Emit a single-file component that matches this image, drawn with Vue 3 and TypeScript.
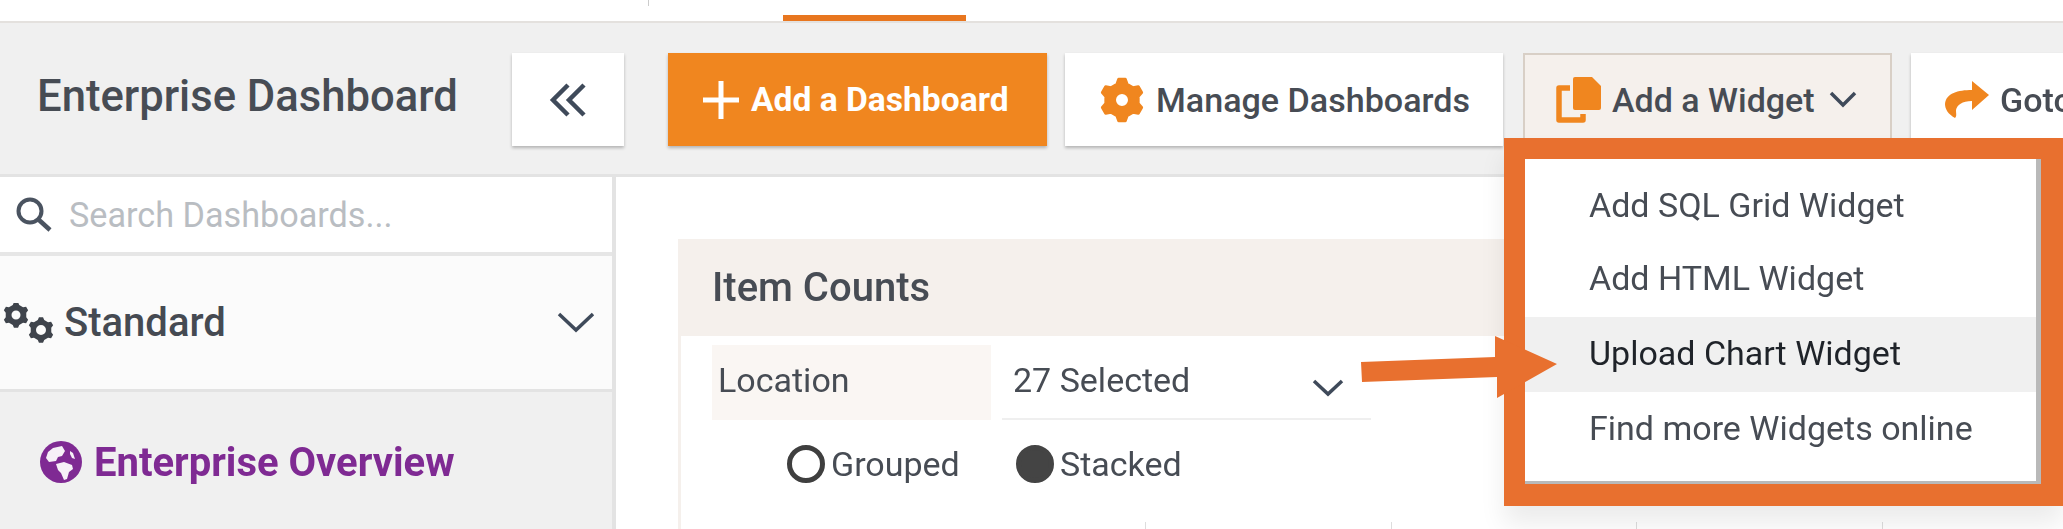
<script setup lang="ts">
const menuItems = [
  { label: 'Add SQL Grid Widget', active: false },
  { label: 'Add HTML Widget', active: false },
  { label: 'Upload Chart Widget', active: true },
  { label: 'Find more Widgets online', active: false },
]

const ticks = [1, 2, 3, 4]

// cog outline with a round hole, used by the manage button and the sidebar icon
function cogPath(cx: number, cy: number, outer: number, inner: number, hole: number, teeth = 6) {
  const pts: string[] = []
  const step = (Math.PI * 2) / teeth
  for (let i = 0; i < teeth; i++) {
    const a = -Math.PI / 2 + i * step
    const spots: [number, number][] = [
      [inner, a - step * 0.3],
      [outer, a - step * 0.15],
      [outer, a + step * 0.15],
      [inner, a + step * 0.3],
    ]
    for (const [r, t] of spots) {
      pts.push(`${(cx + r * Math.cos(t)).toFixed(2)} ${(cy + r * Math.sin(t)).toFixed(2)}`)
    }
  }
  const ring = `M${cx - hole} ${cy}a${hole} ${hole} 0 1 0 ${hole * 2} 0a${hole} ${hole} 0 1 0 ${-hole * 2} 0Z`
  return `M${pts.join('L')}Z${ring}`
}
</script>

<template>
  <div class="page">
    <div class="topbar">
      <span class="topbar-tick" />
      <span class="topbar-tab" />
    </div>

    <div class="toolbar">
      <h1 class="title">Enterprise Dashboard</h1>
      <button class="btn btn-collapse" type="button">
        <svg width="38" height="34" viewBox="0 0 38 34" fill="none" stroke="#3f4a5a" stroke-width="4.5">
          <path d="M19 2 4 17l15 15M35 2 20 17l15 15" />
        </svg>
      </button>
      <button class="btn btn-primary" type="button">
        <svg width="36" height="38" viewBox="0 0 36 38" fill="none" stroke="#fff" stroke-width="5">
          <path d="M18 0v38M0 19h36" />
        </svg>
        Add a Dashboard
      </button>
      <button class="btn btn-manage" type="button">
        <svg width="44" height="46" viewBox="0 0 44 46">
          <path fill="#f0861f" fill-rule="evenodd" stroke="#f0861f" stroke-width="3" stroke-linejoin="round" :d="cogPath(22, 23, 21, 16.5, 7.5)" />
        </svg>
        Manage Dashboards
      </button>
      <button class="btn btn-widget" type="button">
        <svg width="46" height="46" viewBox="0 0 46 46">
          <path d="M14 11H3v32h24v-6" fill="none" stroke="#f0861f" stroke-width="5.5" stroke-linejoin="round" />
          <path d="M19 0h17l9 9v22a2 2 0 0 1-2 2H19a2 2 0 0 1-2-2V2a2 2 0 0 1 2-2Z" fill="#f0861f" />
        </svg>
        Add a Widget
        <svg class="chev-sm" width="28" height="17" viewBox="0 0 28 17" fill="none" stroke="#3f4a5a" stroke-width="3.5">
          <path d="M2 2l12 12L26 2" />
        </svg>
      </button>
      <button class="btn btn-goto" type="button">
        <svg width="44" height="38" viewBox="0 0 44 38">
          <path d="M27 0 44 14 27 29V20C17 20 12 24 11 29 11 33 12 35 10 37 3 33 0 28 0 23 1 12 13 9 27 9Z" fill="#f0861f" />
        </svg>
        Goto
      </button>
    </div>

    <div class="body">
      <aside class="sidebar">
        <div class="search">
          <svg width="36" height="35" viewBox="0 0 36 35" fill="none" stroke="#4a5360" stroke-width="4">
            <circle cx="14" cy="14" r="11.5" />
            <path d="M23 23l11 10" stroke-width="4.5" />
          </svg>
          <span class="search-hint">Search Dashboards...</span>
        </div>
        <div class="group">
          <svg class="group-icon" width="51" height="40" viewBox="0 0 51 40">
            <path fill="#3f444c" fill-rule="evenodd" :d="cogPath(13, 12, 13, 10.5, 4.5)" />
            <path fill="#3f444c" fill-rule="evenodd" :d="cogPath(38, 27, 13, 10.5, 5)" />
          </svg>
          <span class="group-label">Standard</span>
          <svg width="38" height="21" viewBox="0 0 38 21" fill="none" stroke="#3f4a5a" stroke-width="3.5">
            <path d="M2 2l17 16L36 2" />
          </svg>
        </div>
        <div class="nav-item">
          <svg width="42" height="42" viewBox="0 0 42 42">
            <circle cx="21" cy="21" r="21" fill="#7f2a93" />
            <path d="M13 7l9-2 3 5-3 5-4 1-2 4-7 1-3-4 2-6Z M16 23l8-2 8 3 1 4-4 3-2 7-3 1-3-7-3-3Z M30 10l3 2 2 6-3-1-2-4Z" fill="#f6f0f7" />
          </svg>
          <span>Enterprise Overview</span>
        </div>
      </aside>

      <main class="content">
        <section class="card">
          <header class="card-head">Item Counts</header>
          <div class="filter">
            <div class="filter-label">Location</div>
            <div class="filter-value">
              <span>27 Selected</span>
              <svg class="filter-chev" width="32" height="18" viewBox="0 0 32 18" fill="none" stroke="#3f4a5a" stroke-width="3.5">
                <path d="M2 2l14 13L30 2" />
              </svg>
            </div>
          </div>
          <div class="radios">
            <label class="radio"><i class="dot" />Grouped</label>
            <label class="radio"><i class="dot dot-on" />Stacked</label>
          </div>
          <div class="axis">
            <span v-for="t in ticks" :key="t" class="axis-tick" />
          </div>
        </section>
      </main>
    </div>

    <div class="callout">
      <ul class="menu">
        <li v-for="item in menuItems" :key="item.label" class="menu-item" :class="{ active: item.active }">
          {{ item.label }}
        </li>
      </ul>
    </div>
    <svg class="arrow" width="197" height="63" viewBox="0 0 197 63">
      <path d="M0 26 134 21V0L196 28 136 62V41L1 46Z" fill="#e8702f" />
    </svg>
  </div>
</template>

<style>
html,
body {
  margin: 0;
  background: #fff;
}
</style>

<style scoped>
.page {
  position: relative;
  width: 2063px;
  height: 529px;
  overflow: hidden;
  background: #fff;
  font-family: Roboto, 'Liberation Sans', sans-serif;
  color: #474c54;
}

.topbar {
  position: relative;
  height: 21px;
  border-bottom: 2px solid #e4e1de;
}

.topbar-tick {
  position: absolute;
  left: 648px;
  top: 0;
  width: 1px;
  height: 6px;
  background: #ccc;
}

.topbar-tab {
  position: absolute;
  left: 783px;
  bottom: 0;
  width: 183px;
  height: 6px;
  background: #e8761f;
}

.toolbar {
  display: flex;
  align-items: flex-start;
  height: 154px;
  padding-top: 30px;
  box-sizing: border-box;
  background: #f0f0f0;
  border-bottom: 3px solid #e3e3e3;
  filter: blur(0.6px);
}

.title {
  flex: none;
  width: 512px;
  margin: 0;
  padding-left: 37px;
  box-sizing: border-box;
  font-size: 43.6px;
  font-weight: 500;
  line-height: 88px;
  white-space: nowrap;
  color: #474c54;
}

.btn {
  display: flex;
  flex: none;
  align-items: center;
  height: 93px;
  margin: 0 18px 0 0;
  padding: 0;
  border: 0;
  background: #fff;
  box-shadow: 0 2px 3px rgba(0, 0, 0, 0.25);
  font: 500 34px Roboto, 'Liberation Sans', sans-serif;
  color: #474c54;
  white-space: nowrap;
}

.btn-collapse {
  justify-content: center;
  width: 112px;
  margin-right: 44px;
}

.btn-primary {
  gap: 12px;
  width: 379px;
  padding-left: 35px;
  box-sizing: border-box;
  background: #f0861f;
  color: #fff;
  font-size: 33.6px;
  font-weight: 700;
}

.btn-manage {
  gap: 12px;
  width: 438px;
  margin-right: 20px;
  padding-left: 35px;
  box-sizing: border-box;
  font-size: 34.1px;
}

.btn-widget {
  gap: 10px;
  width: 369px;
  margin-right: 19px;
  padding-left: 31px;
  box-sizing: border-box;
  background: #f5f0ec;
  border: 2px solid #d8cfc6;
  box-shadow: none;
}

.chev-sm {
  margin-left: 4px;
}

.btn-goto {
  gap: 11px;
  width: 400px;
  padding-left: 34px;
  box-sizing: border-box;
}

.body {
  display: flex;
  height: 352px;
  filter: blur(0.6px);
}

.sidebar {
  flex: none;
  width: 616px;
  box-sizing: border-box;
  background: #f0f0f0;
  border-right: 4px solid #e3e3e3;
}

.search {
  display: flex;
  align-items: center;
  gap: 17px;
  height: 79px;
  padding-left: 16px;
  box-sizing: border-box;
  background: #fff;
  border-bottom: 4px solid #e6e6e6;
}

.search-hint {
  font-size: 34.2px;
  color: #b9bdc2;
}

.group {
  display: flex;
  align-items: center;
  height: 136px;
  padding: 0 17px 0 3px;
  box-sizing: border-box;
  background: #fbfbfb;
  border-bottom: 3px solid #e3e3e3;
}

.group-icon {
  margin-right: 10px;
}

.group-label {
  flex: 1;
  font-size: 40px;
  font-weight: 500;
  color: #454a52;
}

.nav-item {
  display: flex;
  align-items: center;
  gap: 12px;
  height: 140px;
  padding-left: 40px;
  box-sizing: border-box;
  font-size: 40px;
  font-weight: 700;
  color: #7f2a93;
}

.content {
  flex: 1;
  min-width: 0;
  padding: 62px 0 0 62px;
}

.card {
  border-left: 3px solid #f5f0ec;
}

.card-head {
  height: 97px;
  margin-left: -3px;
  padding-left: 34px;
  box-sizing: border-box;
  background: #f5f0ec;
  font-size: 40px;
  font-weight: 500;
  line-height: 97px;
  color: #474c54;
}

.filter {
  display: flex;
  gap: 11px;
  height: 75px;
  margin: 9px 0 0 31px;
  font-size: 34px;
}

.filter-label {
  width: 279px;
  padding-left: 6px;
  box-sizing: border-box;
  background: #faf6f3;
  line-height: 70px;
}

.filter-value {
  display: flex;
  width: 369px;
  padding-left: 11px;
  box-sizing: border-box;
  border-bottom: 2px solid #efefef;
  line-height: 70px;
}

.filter-chev {
  margin: 34px 0 0 122px;
}

.radios {
  display: flex;
  margin: 25px 0 0 106px;
  font-size: 34px;
}

.radio {
  display: flex;
  align-items: center;
  gap: 6px;
  width: 229px;
  height: 38px;
}

.dot {
  width: 38px;
  height: 38px;
  box-sizing: border-box;
  border: 5px solid #3f3f3f;
  border-radius: 50%;
}

.dot-on {
  background: #444;
  border-color: #444;
}

.axis {
  display: flex;
  gap: 244.5px;
  margin: 39px 0 0 464px;
}

.axis-tick {
  width: 1px;
  height: 8px;
  background: #ddd;
}

.callout {
  position: absolute;
  left: 1504px;
  top: 138px;
  width: 559px;
  height: 368px;
  box-sizing: border-box;
  border: 21px solid #e8702f;
  border-right-width: 22px;
  border-bottom-width: 22px;
  background: #fff;
  box-shadow: 0 18px 24px rgba(0, 0, 0, 0.08);
}

.menu {
  height: 100%;
  margin: 0;
  padding: 10px 0 0;
  box-sizing: border-box;
  list-style: none;
  background: #fff;
  border-right: 5px solid #b9b9b9;
  border-bottom: 3px solid #b9b9b9;
}

.menu-item {
  height: 75px;
  padding-left: 64px;
  font-size: 34px;
  line-height: 72px;
  color: #474c54;
  filter: blur(0.5px);
}

.menu-item:first-child {
  height: 73px;
}

.menu-item.active {
  background: #f0f0f0;
  color: #1f2329;
}

.arrow {
  position: absolute;
  left: 1361px;
  top: 336px;
}
</style>
